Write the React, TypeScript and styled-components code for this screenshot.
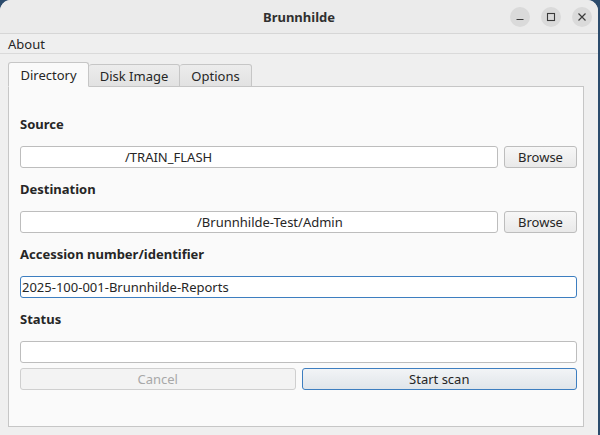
import React from "react";
import styled, { createGlobalStyle } from "styled-components";

const Global = createGlobalStyle`
  html, body { margin: 0; padding: 0; background: #2b4b6c; }
  body { font-family: "Noto Sans", "Open Sans", sans-serif; font-size: 13px; color: #2e2e2e; }
  #root { width: 600px; height: 435px; overflow: hidden; }
`;

const Desktop = styled.div`
  width: 600px;
  height: 435px;
  display: flex;
  background: #2b4b6c;
`;

const Window = styled.div`
  width: 598px;
  height: 435px;
  background: #efefef;
  border-radius: 11px 11px 0 0;
  overflow: hidden;
  display: flex;
  flex-direction: column;
`;

const TitleBar = styled.div`
  height: 33px;
  flex: none;
  background: #ebebeb;
  border-bottom: 1px solid #d6d6d6;
  display: grid;
  grid-template-columns: 1fr auto 1fr;
  align-items: center;
`;

const Title = styled.div`
  grid-column: 2;
  font-weight: 700;
  font-size: 13px;
  color: #303030;
`;

const Controls = styled.div`
  grid-column: 3;
  justify-self: end;
  display: flex;
  gap: 11px;
  padding-right: 6px;
`;

const CtlButton = styled.div`
  width: 20px;
  height: 20px;
  border-radius: 50%;
  background: #dadada;
  display: flex;
  align-items: center;
  justify-content: center;
`;

const MenuBar = styled.div`
  height: 19px;
  flex: none;
  border-bottom: 1px solid #dadada;
  display: flex;
  align-items: center;
  padding-left: 8px;
`;

const MenuItem = styled.span`
  font-size: 13px;
  color: #262626;
`;

const Body = styled.div`
  flex: 1;
  display: flex;
  flex-direction: column;
  padding: 9px 14px 8px 8px;
`;

const TabBar = styled.div`
  display: flex;
  align-items: flex-end;
  height: 24px;
  position: relative;
  z-index: 1;
  margin-bottom: -1px;
`;

const Tab = styled.div<{ $active?: boolean; $w: number }>`
  width: ${(p) => p.$w}px;
  box-sizing: border-box;
  height: ${(p) => (p.$active ? 25 : 23)}px;
  border: 1px solid #c6c6c6;
  border-bottom: ${(p) => (p.$active ? "1px solid #fafafa" : "1px solid #c6c6c6")};
  border-left-width: ${(p) => (p.$active ? 1 : 0)}px;
  border-radius: 3px 3px 0 0;
  background: ${(p) => (p.$active ? "#fafafa" : "linear-gradient(#ececec, #e2e2e2)")};
  display: flex;
  align-items: center;
  justify-content: center;
  font-size: 13px;
  color: #262626;
  padding-top: ${(p) => (p.$active ? 0 : 1)}px;
`;

const Panel = styled.div`
  flex: 1;
  background: #fafafa;
  border: 1px solid #c6c6c6;
  display: flex;
  flex-direction: column;
  padding: 28px 6px 0 11px;
`;

const Label = styled.div`
  font-weight: 700;
  font-size: 13px;
  color: #262626;
  height: 18px;
  line-height: 18px;
  margin-bottom: 13px;
`;

const Row = styled.div`
  display: flex;
  gap: 6px;
  margin-bottom: 12px;
`;

const Field = styled.div<{ $focus?: boolean; $indent?: number }>`
  flex: 1;
  height: 22px;
  box-sizing: border-box;
  background: #ffffff;
  border: 1px solid ${(p) => (p.$focus ? "#3d7ec0" : "#bdbdbd")};
  border-radius: 3px;
  display: flex;
  align-items: center;
  padding-left: ${(p) => p.$indent ?? 1}px;
  font-size: 13px;
  color: #262626;
  white-space: nowrap;
  overflow: hidden;
`;

const Button = styled.div<{ $w?: number; $primary?: boolean; $disabled?: boolean }>`
  ${(p) => (p.$w ? `width: ${p.$w}px; flex: none;` : "flex: 1;")}
  height: 22px;
  box-sizing: border-box;
  border: 1px solid ${(p) => (p.$primary ? "#3d7ec0" : p.$disabled ? "#cfcfcf" : "#bdbdbd")};
  border-radius: 3px;
  background: ${(p) =>
    p.$primary
      ? "linear-gradient(#f2f4f6, #e0e5ea)"
      : p.$disabled
      ? "#f3f3f3"
      : "linear-gradient(#f7f7f7, #e9e9e9)"};
  color: ${(p) => (p.$disabled ? "#a8a8a8" : "#262626")};
  display: flex;
  align-items: center;
  justify-content: center;
  font-size: 13px;
`;

const Buttons = styled.div`
  display: flex;
  gap: 6px;
  margin-top: -7px;
`;

export default function App() {
  return (
    <Desktop>
      <Global />
      <Window>
        <TitleBar>
          <Title>Brunnhilde</Title>
          <Controls>
            <CtlButton>
              <svg width="10" height="10" viewBox="0 0 10 10">
                <line x1="1.5" y1="7.5" x2="8.5" y2="7.5" stroke="#3a3a3a" strokeWidth="1.2" />
              </svg>
            </CtlButton>
            <CtlButton>
              <svg width="10" height="10" viewBox="0 0 10 10">
                <rect x="1.5" y="1.5" width="7" height="7" fill="none" stroke="#3a3a3a" strokeWidth="1.1" />
              </svg>
            </CtlButton>
            <CtlButton>
              <svg width="10" height="10" viewBox="0 0 10 10">
                <path d="M1.5 1.5 L8.5 8.5 M8.5 1.5 L1.5 8.5" stroke="#3a3a3a" strokeWidth="1.2" />
              </svg>
            </CtlButton>
          </Controls>
        </TitleBar>
        <MenuBar>
          <MenuItem>About</MenuItem>
        </MenuBar>
        <Body>
          <TabBar>
            <Tab $active $w={81}>Directory</Tab>
            <Tab $w={91}>Disk Image</Tab>
            <Tab $w={72}>Options</Tab>
          </TabBar>
          <Panel>
            <Label>Source</Label>
            <Row>
              <Field $indent={104}>/TRAIN_FLASH</Field>
              <Button $w={73}>Browse</Button>
            </Row>
            <Label>Destination</Label>
            <Row>
              <Field $indent={176}>/Brunnhilde-Test/Admin</Field>
              <Button $w={73}>Browse</Button>
            </Row>
            <Label>Accession number/identifier</Label>
            <Row>
              <Field $focus $indent={1}>2025-100-001-Brunnhilde-Reports</Field>
            </Row>
            <Label>Status</Label>
            <Row>
              <Field />
            </Row>
            <Buttons>
              <Button $disabled>Cancel</Button>
              <Button $primary>Start scan</Button>
            </Buttons>
          </Panel>
        </Body>
      </Window>
    </Desktop>
  );
}
